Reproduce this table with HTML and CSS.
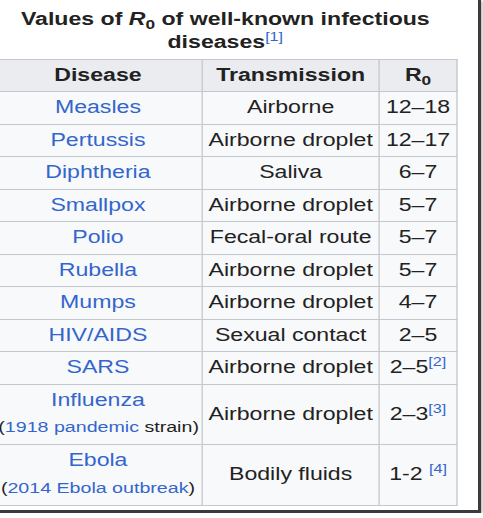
FILE: index.html
```html
<!DOCTYPE html>
<html lang="en">
<head>
<meta charset="utf-8">
<title>Values of R0 of well-known infectious diseases</title>
<link rel="stylesheet" href="styles.css">
</head>
<body>
<div class="frame">
  <div class="stretch">
    <table class="wikitable">
      <caption>Values of <i>R</i><sub>0</sub> of well-known infectious diseases<sup class="ref">[1]</sup></caption>
      <colgroup><col class="c1"><col class="c2"><col class="c3"></colgroup>
      <thead>
        <tr><th>Disease</th><th>Transmission</th><th>R<sub>0</sub></th></tr>
      </thead>
      <tbody>
        <tr><td><a href="#">Measles</a></td><td>Airborne</td><td>12–18</td></tr>
        <tr><td><a href="#">Pertussis</a></td><td>Airborne droplet</td><td>12–17</td></tr>
        <tr><td><a href="#">Diphtheria</a></td><td>Saliva</td><td>6–7</td></tr>
        <tr><td><a href="#">Smallpox</a></td><td>Airborne droplet</td><td>5–7</td></tr>
        <tr><td><a href="#">Polio</a></td><td>Fecal-oral route</td><td>5–7</td></tr>
        <tr><td><a href="#">Rubella</a></td><td>Airborne droplet</td><td>5–7</td></tr>
        <tr><td><a href="#">Mumps</a></td><td>Airborne droplet</td><td>4–7</td></tr>
        <tr><td><a href="#">HIV/AIDS</a></td><td>Sexual contact</td><td>2–5</td></tr>
        <tr><td><a href="#">SARS</a></td><td>Airborne droplet</td><td>2–5<sup class="ref">[2]</sup></td></tr>
        <tr><td><a href="#">Influenza</a><div class="note">(<a href="#">1918 pandemic</a> strain)</div></td><td>Airborne droplet</td><td>2–3<sup class="ref">[3]</sup></td></tr>
        <tr><td><a href="#">Ebola</a><div class="note">(<a href="#">2014 Ebola outbreak</a>)</div></td><td>Bodily fluids</td><td>1-2 <sup class="ref">[4]</sup></td></tr>
      </tbody>
    </table>
  </div>
</div>
</body>
</html>
```
FILE: styles.css
```css
body {
  margin: 0;
  background: #ffffff;
  font-family: "Liberation Sans", Arial, sans-serif;
  color: #222222;
}

.frame {
  width: 478px;
  height: 510px;
  border-right: 3px solid #3b3b3b;
  border-bottom: 3px solid #3b3b3b;
  box-shadow: 1px 1px 3px rgba(0, 0, 0, 0.35);
  overflow: hidden;
  background: #ffffff;
}

.stretch {
  width: 351px;
  margin-left: -7px;
  padding-top: 8px;
  transform: scaleX(1.32);
  transform-origin: 0 0;
}

.wikitable {
  width: 351px;
  border-collapse: collapse;
  table-layout: fixed;
  font-size: 17.5px;
}

.wikitable caption {
  font-weight: bold;
  line-height: 23px;
  padding-bottom: 4.5px;
  text-align: center;
}

.c1 { width: 158px; }
.c2 { width: 134px; }
.c3 { width: 59px; }

.wikitable th,
.wikitable td {
  border: 1px solid #c4c8cc;
  padding: 3px 3px;
  line-height: 25.5px;
  text-align: center;
  vertical-align: middle;
  white-space: nowrap;
}

.wikitable th {
  background: #eaecf0;
  font-weight: bold;
}

.wikitable td {
  background: #f8f9fa;
}

.wikitable a {
  color: #3366cc;
  text-decoration: none;
}

.note {
  font-size: 85%;
  line-height: 28px;
}

sub {
  font-size: 75%;
  line-height: 0;
  vertical-align: -0.3em;
}

.ref {
  font-size: 70%;
  line-height: 0;
  vertical-align: 0.6em;
  color: #3366cc;
  font-weight: normal;
}
```
